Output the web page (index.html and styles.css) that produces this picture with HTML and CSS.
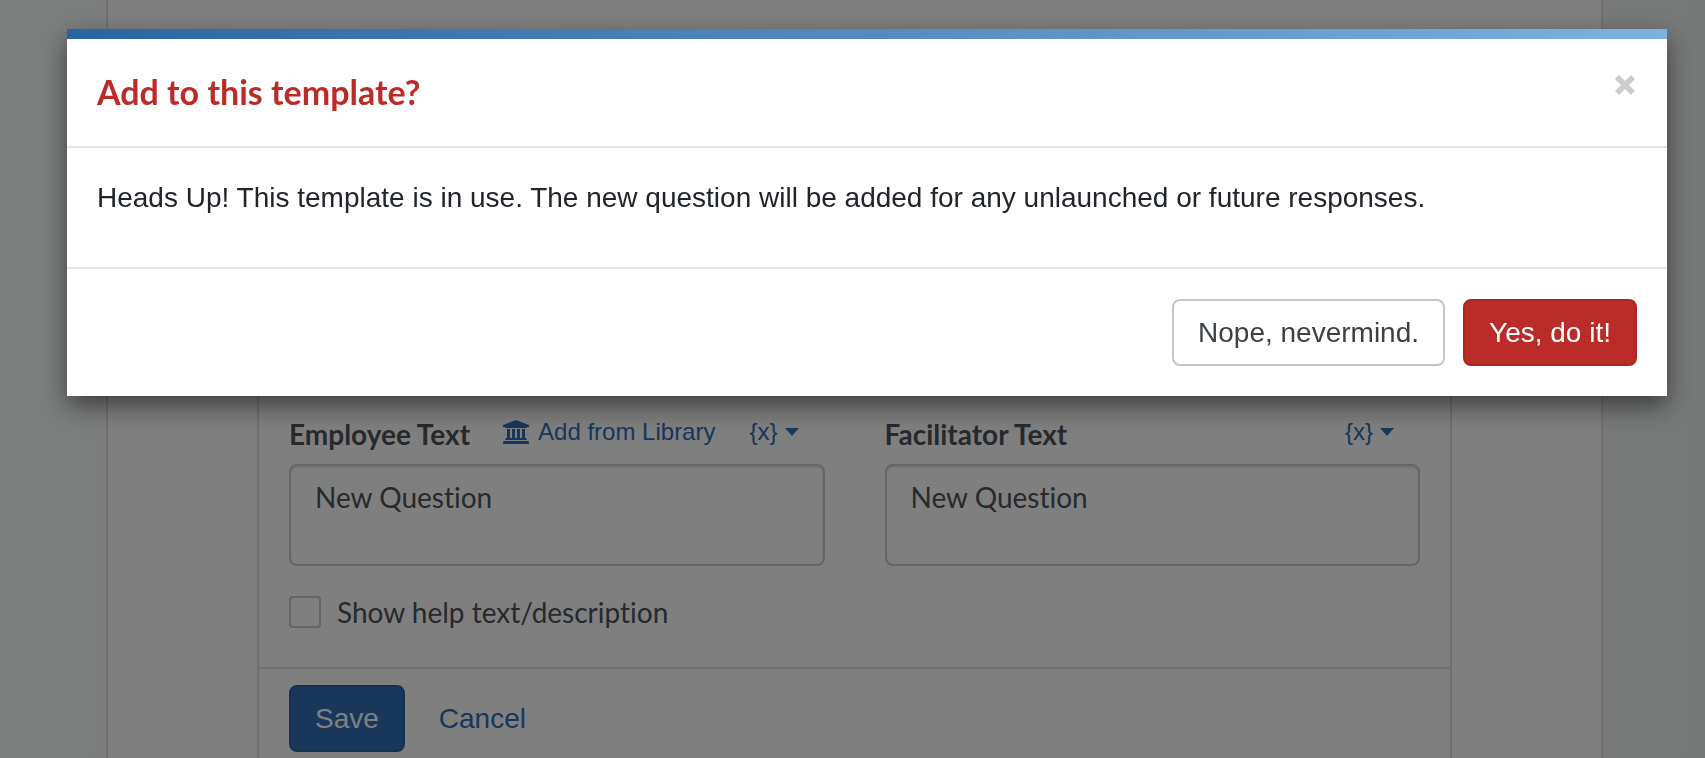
FILE: index.html
```
<!DOCTYPE html>
<html lang="en">
<head>
    <meta charset="UTF-8">
    <meta name="viewport" content="width=device-width, initial-scale=1.0">
    <title>Edit Template</title>
    <link rel="stylesheet" href="styles.css">
</head>
<body>
<div class="page">
    <form class="panel">
        <div class="panel-body">
            <div class="questions">
                <div class="question">
                    <div class="question-header">
                        <label for="employeeText">Employee Text</label>
                        <a href="#" class="library-link">
                            <svg class="icon-bank" viewBox="0 0 26 24" fill="currentColor" aria-hidden="true">
                                <path d="M13 0L26 5v2h-2v1H2V7H0V5zM4 9h3v9h2V9h3v9h2V9h3v9h2V9h3v9h1l1 2H2l1-2h1zM1 21h24l1 1v2H0v-2z"/>
                            </svg>
                            Add from Library</a>
                        <a href="#" class="variable-link">{x} <span class="caret"></span></a>
                    </div>
                    <textarea id="employeeText" name="employeeText">New Question</textarea>
                </div>
                <div class="question">
                    <div class="question-header">
                        <label for="facilitatorText">Facilitator Text</label>
                        <a href="#" class="variable-link">{x} <span class="caret"></span></a>
                    </div>
                    <textarea id="facilitatorText" name="facilitatorText">New Question</textarea>
                </div>
            </div>
            <div class="checkbox">
                <input type="checkbox" id="showHelp" name="showHelp">
                <label for="showHelp">Show help text/description</label>
            </div>
        </div>
        <div class="panel-footer">
            <button type="submit" class="btn btn-primary">Save</button>
            <a href="#" class="cancel-link">Cancel</a>
        </div>
    </form>
</div>

<div class="backdrop">
    <div class="modal" role="dialog" aria-modal="true" aria-labelledby="modalTitle">
        <div class="modal-header">
            <h1 id="modalTitle">Add to this template?</h1>
            <button type="button" class="close" aria-label="Close">
                <svg viewBox="0 0 20 20" fill="currentColor" aria-hidden="true">
                    <path d="M4 0L10 6L16 0L20 4L14 10L20 16L16 20L10 14L4 20L0 16L6 10L0 4z"/>
                </svg>
            </button>
        </div>
        <div class="modal-body">
            <p>Heads Up! This template is in use. The new question will be added for any unlaunched or future responses.</p>
        </div>
        <div class="modal-footer">
            <button type="button" class="btn btn-default">Nope, nevermind.</button>
            <button type="button" class="btn btn-danger">Yes, do it!</button>
        </div>
    </div>
</div>
</body>
</html>
```
FILE: styles.css
```
* {
  box-sizing: border-box;
}

body {
  margin: 0;
  font-family: Arial, "Liberation Sans", sans-serif;
  font-size: 28px;
  font-variant-ligatures: none;
  line-height: 40px;
  color: #4e545a;
  background: linear-gradient(to right, #f9fefb, #eef3f0);
}

a {
  color: #306eb6;
  text-decoration: none;
}

.page {
  display: flex;
  min-height: 100vh;
  margin: 0 102px 0 106px;
  padding: 60px 149px 0;
  background-color: #fff;
  border: solid #e0e0e0;
  border-width: 0 2px;
}

/* question editor */
.panel {
  display: flex;
  flex-direction: column;
  justify-content: flex-end;
  flex: 1;
  border: solid #e0e0e0;
  border-width: 0 2px;
}

.panel-body {
  padding: 0 30px 35px;
  border-bottom: 2px solid #e0e0e0;
}

.questions {
  display: grid;
  grid-template-columns: 1fr 1fr;
  gap: 60px;
}

.question-header {
  display: flex;
  align-items: center;
  padding-right: 26px;
  margin-bottom: 8px;
  font-size: 24px;
}

.question-header label {
  font-family: Lato, sans-serif;
  font-size: 28px;
  font-weight: bold;
}

.question-header a {
  display: flex;
  align-items: center;
  padding-bottom: 4px;
}

.library-link {
  gap: 9px;
  margin-left: 33px;
}

.variable-link {
  gap: 7px;
  margin-left: auto;
}

.icon-bank {
  width: 26px;
  height: 24px;
}

.caret {
  border-top: 8px solid;
  border-right: 7px solid transparent;
  border-left: 7px solid transparent;
}

textarea {
  display: block;
  width: 100%;
  height: 102px;
  padding: 11px 24px;
  font-family: Lato, sans-serif;
  font-size: 28px;
  font-variant-ligatures: none;
  line-height: 40px;
  color: #4e545a;
  background-color: #fff;
  border: 2px solid #ccc;
  border-radius: 8px;
  box-shadow: inset 0 2px 2px rgba(0, 0, 0, 0.08);
  resize: none;
}

.checkbox {
  display: flex;
  align-items: center;
  gap: 16px;
  margin-top: 26px;
  font-family: Lato, sans-serif;
}

.checkbox input {
  appearance: none;
  width: 32px;
  height: 32px;
  margin: 0;
  background-color: #fff;
  border: 2px solid #ccc;
  border-radius: 4px;
}

.panel-footer {
  display: flex;
  align-items: center;
  gap: 34px;
  padding: 16px 30px 6px;
}

.btn {
  padding: 12px 24px;
  font-family: inherit;
  font-size: 28px;
  line-height: 39px;
  border: 2px solid;
  border-radius: 8px;
  cursor: pointer;
}

.btn-primary {
  color: #fff;
  background-color: #306eb6;
  border-color: #2b62a3;
}

.btn-default {
  color: #3c4146;
  background-color: #fff;
  border-color: #c2c7cc;
}

.btn-danger {
  color: #fff;
  background-color: #bb2c28;
  border-color: #a72723;
}

/* modal */
.backdrop {
  position: fixed;
  inset: 0;
  padding: 29px 38px 0 67px;
  background-color: rgba(0, 0, 0, 0.5);
}

.modal {
  color: #212529;
  background-color: #fff;
  box-shadow: 0 10px 24px rgba(0, 0, 0, 0.5);
}

.modal::before {
  content: "";
  display: block;
  height: 10px;
  background: linear-gradient(to right, #2a64a0, #7eb0e0);
}

.modal-header {
  display: flex;
  justify-content: space-between;
  align-items: flex-start;
  padding: 30px;
  border-bottom: 2px solid #e5e5e5;
}

.modal-header h1 {
  margin: 0 0 2px;
  font-family: Lato, sans-serif;
  font-size: 34px;
  line-height: 45px;
  color: #bb2c28;
}

.close {
  padding: 6px 2px;
  color: #ccc;
  background: none;
  border: 0;
  cursor: pointer;
}

.close svg {
  display: block;
  width: 20px;
  height: 20px;
}

.modal-body {
  padding: 30px 30px 49px;
}

.modal-body p {
  margin: 0;
}

.modal-footer {
  display: flex;
  justify-content: flex-end;
  gap: 18px;
  padding: 30px;
  border-top: 2px solid #e5e5e5;
}
```
